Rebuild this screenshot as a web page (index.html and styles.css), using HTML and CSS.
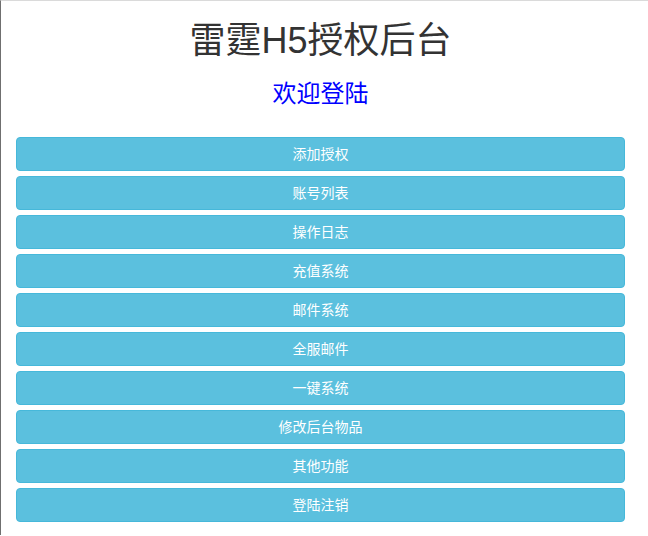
FILE: index.html
```html
<!DOCTYPE html>
<html lang="zh-CN">
<head>
<meta charset="utf-8">
<title>雷霆H5授权后台</title>
<link rel="stylesheet" href="styles.css">
</head>
<body>
<div class="page">
  <h1 class="title">雷霆H5授权后台</h1>
  <h3 class="welcome">欢迎登陆</h3>
  <div class="menu">
    <a class="btn" href="#">添加授权</a>
    <a class="btn" href="#">账号列表</a>
    <a class="btn" href="#">操作日志</a>
    <a class="btn" href="#">充值系统</a>
    <a class="btn" href="#">邮件系统</a>
    <a class="btn" href="#">全服邮件</a>
    <a class="btn" href="#">一键系统</a>
    <a class="btn" href="#">修改后台物品</a>
    <a class="btn" href="#">其他功能</a>
    <a class="btn" href="#">登陆注销</a>
  </div>
</div>
</body>
</html>
```
FILE: styles.css
```css
html, body {
  margin: 0;
  padding: 0;
  background: #fff;
}
body {
  font-family: "Liberation Sans", "Noto Sans CJK SC", sans-serif;
  color: #333;
  border-top: 1px solid #dadada;
  border-left: 1px solid #6f6f6f;
  min-height: 535px;
  box-sizing: border-box;
}
.page {
  padding: 0 23px 0 15px;
  text-align: center;
  overflow: hidden;
}
.title {
  font-size: 36px;
  font-weight: 400;
  line-height: 1.1;
  margin: 20px 0 0;
  color: #333;
}
.welcome {
  font-size: 24px;
  font-weight: 400;
  line-height: 1.1;
  margin: 20px 0 30px;
  color: #0000ff;
}
.menu {
  display: flex;
  flex-direction: column;
  gap: 5px;
}
.btn {
  display: block;
  box-sizing: border-box;
  height: 34px;
  line-height: 20px;
  padding: 6px 12px;
  font-size: 14px;
  font-weight: 400;
  color: #fff;
  text-decoration: none;
  background: #5bc0de;
  border: 1px solid #46b8da;
  border-radius: 4px;
}
```
